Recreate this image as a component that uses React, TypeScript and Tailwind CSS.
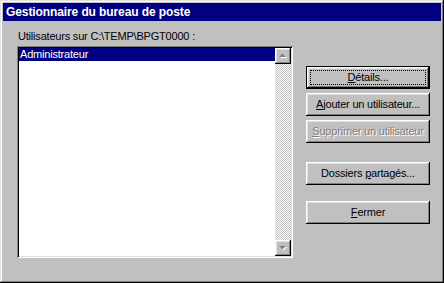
import React from "react";

const btn =
  "shadow-[inset_-1px_-1px_#000000,inset_1px_1px_#ffffff,inset_-2px_-2px_#808080,inset_2px_2px_#dfdfdf]";

function Arrow({ up }: { up?: boolean }) {
  return (
    <svg width="16" height="16" viewBox="0 0 16 16" className="block">
      {up ? (
        <>
          <polygon points="5,10 12,10 8.5,6.5" fill="#ffffff" />
          <polygon points="4,9 11,9 7.5,5.5" fill="#808080" />
        </>
      ) : (
        <>
          <polygon points="5,7 12,7 8.5,10.5" fill="#ffffff" />
          <polygon points="4,6 11,6 7.5,9.5" fill="#808080" />
        </>
      )}
    </svg>
  );
}

function Button({
  children,
  isDefault,
  disabled,
  className = "",
}: {
  children: React.ReactNode;
  isDefault?: boolean;
  disabled?: boolean;
  className?: string;
}) {
  if (isDefault) {
    return (
      <div className={`h-[23px] w-[124px] border border-black ${className}`}>
        <div className={`flex h-full w-full items-center justify-center p-[3px] ${btn}`}>
          <div className="flex h-full w-full items-center justify-center border border-dotted border-black">
            {children}
          </div>
        </div>
      </div>
    );
  }
  return (
    <div
      className={`flex h-[23px] w-[124px] items-center justify-center ${btn} ${
        disabled ? "text-[#808080] [text-shadow:1px_1px_0_#ffffff]" : ""
      } ${className}`}
    >
      {children}
    </div>
  );
}

export default function App() {
  return (
    <div className="h-[283px] w-[444px] bg-[#c0c0c0] p-[3px] font-['Liberation_Sans',Arial,sans-serif] text-[11px] leading-[13px] text-black shadow-[inset_-1px_-1px_#000000,inset_1px_1px_#dfdfdf,inset_-2px_-2px_#808080,inset_2px_2px_#ffffff]">
      {/* Title bar */}
      <div className="flex h-[18px] items-center bg-[#000080] pl-[3px] text-[12px] font-bold tracking-[-0.1px] text-white">
        Gestionnaire du bureau de poste
      </div>

      <div className="flex pl-[14px] tracking-[-0.2px]">
        {/* Users list */}
        <div className="flex flex-col pt-[9px]">
          <div className="pl-[1px]">Utilisateurs sur C:\TEMP\BPGT0000 :</div>
          <div className="mt-[3px] flex h-[212px] w-[276px] bg-white p-[2px] shadow-[inset_1px_1px_#808080,inset_-1px_-1px_#ffffff,inset_2px_2px_#000000,inset_-2px_-2px_#dfdfdf]">
            <div className="flex-1">
              <div className="h-[13px] bg-[#000080] pl-[1px] text-white">Administrateur</div>
            </div>
            <div className="flex w-[16px] flex-col">
              <div className={`h-[16px] bg-[#c0c0c0] ${btn}`}>
                <Arrow up />
              </div>
              <div className="flex-1 bg-[repeating-conic-gradient(#c0c0c0_0%_25%,#ffffff_0%_50%)] bg-[length:2px_2px]" />
              <div className={`h-[16px] bg-[#c0c0c0] ${btn}`}>
                <Arrow />
              </div>
            </div>
          </div>
        </div>

        {/* Actions */}
        <div className="ml-[13px] flex flex-col pt-[45px]">
          <Button isDefault>
            <span>
              <u>D</u>étails...
            </span>
          </Button>
          <Button className="mt-[4px]">
            <span>
              <u>A</u>jouter un utilisateur...
            </span>
          </Button>
          <Button disabled className="mt-[4px]">
            <span>
              <u>S</u>upprimer un utilisateur
            </span>
          </Button>
          <Button className="mt-[19px]">
            <span>
              Dossiers <u>p</u>artagés...
            </span>
          </Button>
          <Button className="mt-[16px]">
            <span>
              <u>F</u>ermer
            </span>
          </Button>
        </div>
      </div>
    </div>
  );
}
